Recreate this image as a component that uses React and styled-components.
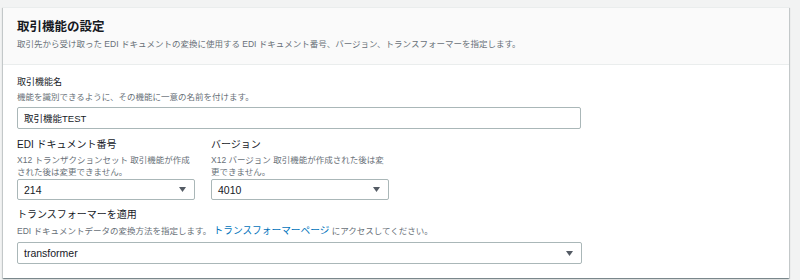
import React from 'react'
import styled, { createGlobalStyle } from 'styled-components'

const GlobalStyle = createGlobalStyle`
  body {
    margin: 0;
    background: #f2f3f3;
    font-family: "Liberation Sans", "Noto Sans CJK JP", sans-serif;
    color: #16191f;
  }
`

const Page = styled.div`
  padding: 7px 11px 2px 3px;
`

const Card = styled.section`
  background: #fff;
  border-top: 1px solid #eaeded;
  box-shadow: 0 1px 1px 0 rgba(0, 28, 36, 0.3), 1px 1px 1px 0 rgba(0, 28, 36, 0.15),
    -1px 1px 1px 0 rgba(0, 28, 36, 0.15);
`

const Header = styled.header`
  background: #fafafa;
  border-bottom: 1px solid #eaeded;
  padding: 10px 14px 14px;
  display: flex;
  flex-direction: column;
  gap: 2px;
`

const Title = styled.h2`
  margin: 0;
  font-size: 12.5px;
  line-height: 18px;
  font-weight: 700;
`

const Desc = styled.div`
  font-size: 8.5px;
  line-height: 12px;
  color: #687078;
  margin-bottom: ${p => p.$mb || 0}px;
`

const Body = styled.div`
  padding: 10px 14px 14px;
  display: flex;
  flex-direction: column;
`

const Field = styled.div`
  display: flex;
  flex-direction: column;
  width: ${p => p.$w}px;
  margin-top: ${p => p.$mt || 0}px;
`

const Label = styled.label`
  font-size: ${p => p.$size || 10}px;
  line-height: 14px;
  color: #16191f;
  margin-bottom: ${p => p.$mb || 2}px;
`

const Row = styled.div`
  display: flex;
  gap: 16px;
  margin-top: 9px;
`

const Input = styled.input`
  box-sizing: border-box;
  height: 22px;
  width: 100%;
  border: 1px solid #aab7b8;
  border-radius: 2px;
  padding: 0 6px;
  font-family: inherit;
  font-size: 9.5px;
  color: #16191f;
  background: #fff;
  outline: none;
`

const SelectBox = styled.button`
  box-sizing: border-box;
  height: ${p => p.$h || 21}px;
  width: 100%;
  display: flex;
  align-items: center;
  justify-content: space-between;
  border: 1px solid #aab7b8;
  border-radius: 2px;
  padding: 0 8px 0 6px;
  background: #fff;
  font-family: inherit;
  font-size: 10.5px;
  color: #16191f;
  text-align: left;
`

const Link = styled.a`
  color: #0073bb;
  font-size: 9.7px;
  text-decoration: none;
`

const Caret = () => (
  <svg width="7" height="5" viewBox="0 0 7 5">
    <path d="M0 0h7L3.5 5z" fill="#545b64" />
  </svg>
)

const Select = ({ value, h }) => (
  <SelectBox type="button" $h={h}>
    <span>{value}</span>
    <Caret />
  </SelectBox>
)

export default function App() {
  return (
    <Page>
      <GlobalStyle />
      <Card>
        <Header>
          <Title>取引機能の設定</Title>
          <Desc>
            取引先から受け取った EDI ドキュメントの変換に使用する EDI ドキュメント番号、バージョン、トランスフォーマーを指定します。
          </Desc>
        </Header>
        <Body>
          <Field $w={564}>
            <Label $size={9}>取引機能名</Label>
            <Desc $mb={4}>機能を識別できるように、その機能に一意の名前を付けます。</Desc>
            <Input defaultValue="取引機能TEST" />
          </Field>
          <Row>
            <Field $w={178}>
              <Label>EDI ドキュメント番号</Label>
              <Desc $mb={1}>X12 トランザクションセット 取引機能が作成された後は変更できません。</Desc>
              <Select value="214" />
            </Field>
            <Field $w={178}>
              <Label>バージョン</Label>
              <Desc $mb={1}>X12 バージョン 取引機能が作成された後は変更できません。</Desc>
              <Select value="4010" />
            </Field>
          </Row>
          <Field $w={565} $mt={8}>
            <Label $mb={3}>トランスフォーマーを適用</Label>
            <Desc $mb={5}>
              EDI ドキュメントデータの変換方法を指定します。 <Link href="#">トランスフォーマーページ</Link> にアクセスしてください。
            </Desc>
            <Select value="transformer" h={22} />
          </Field>
        </Body>
      </Card>
    </Page>
  )
}
